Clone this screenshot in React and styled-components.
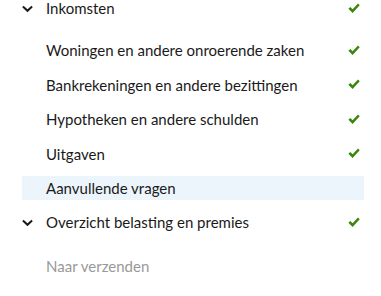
import styled, { createGlobalStyle } from "styled-components";

const GlobalStyle = createGlobalStyle`
	body {
		margin: 0;
		background: #fff;
		font-family: Lato, "Liberation Sans", sans-serif;
	}
`;

const sections = [
	{
		title: "Inkomsten",
		done: true,
		items: [
			{ label: "Woningen en andere onroerende zaken", done: true },
			{ label: "Bankrekeningen en andere bezittingen", done: true },
			{ label: "Hypotheken en andere schulden", done: true },
			{ label: "Uitgaven", done: true },
			{ label: "Aanvullende vragen", active: true },
		],
	},
	{ title: "Overzicht belasting en premies", done: true, items: [] },
];

const Check = () => (
	<CheckIcon viewBox="0 0 12 11" aria-hidden="true">
		<path d="M0.4 5.7 L2.3 3.9 L4.6 6.3 L10 0.5 L11.7 2.2 L4.6 10 Z" fill="#39870c" />
	</CheckIcon>
);

const Chevron = () => (
	<ChevronIcon viewBox="0 0 12 8" aria-hidden="true">
		<path d="M1 1.3 L6 6 L11 1.3" fill="none" stroke="#1a1a1a" strokeWidth="2.2" />
	</ChevronIcon>
);

const App = () => {
	return (
		<>
			<GlobalStyle />
			<Nav>
				{sections.map((section) => (
					<Section key={section.title}>
						<Header>
							<Chevron />
							<Title>{section.title}</Title>
							{section.done && <Check />}
						</Header>
						{section.items.length > 0 && (
							<SubList>
								{section.items.map((item) => (
									<Item key={item.label} active={item.active}>
										<Label>{item.label}</Label>
										{item.done && <Check />}
									</Item>
								))}
							</SubList>
						)}
					</Section>
				))}
				<Disabled>Naar verzenden</Disabled>
			</Nav>
		</>
	);
};

export default App;

const Nav = styled.nav`
	display: flex;
	flex-direction: column;
	width: 342px;
	margin-left: 22px;
	color: #1a1a1a;
	font-size: 15px;
`;

const Section = styled.div`
	display: flex;
	flex-direction: column;
	margin-bottom: 14px;
`;

const Header = styled.div`
	display: flex;
	align-items: center;
	height: 16px;
	padding-right: 4px;
`;

const ChevronIcon = styled.svg`
	width: 11px;
	height: 8px;
	margin-right: 13px;
	margin-top: 1px;
	flex-shrink: 0;
`;

const Title = styled.span`
	flex: 1;
	white-space: nowrap;
`;

const SubList = styled.ul`
	list-style: none;
	margin: 22px 0 0;
	padding: 0;
	display: flex;
	flex-direction: column;
	gap: 10.5px;
`;

const Item = styled.li`
	display: flex;
	align-items: center;
	height: 24px;
	padding: 0 4px 0 24px;
	background: ${(props) => (props.active ? "#edf5fc" : "transparent")};
`;

const Label = styled.span`
	flex: 1;
	white-space: nowrap;
`;

const CheckIcon = styled.svg`
	width: 12px;
	height: 11px;
	flex-shrink: 0;
`;

const Disabled = styled.div`
	height: 24px;
	display: flex;
	align-items: center;
	padding-left: 24px;
	margin-top: 10px;
	color: #999;
`;
